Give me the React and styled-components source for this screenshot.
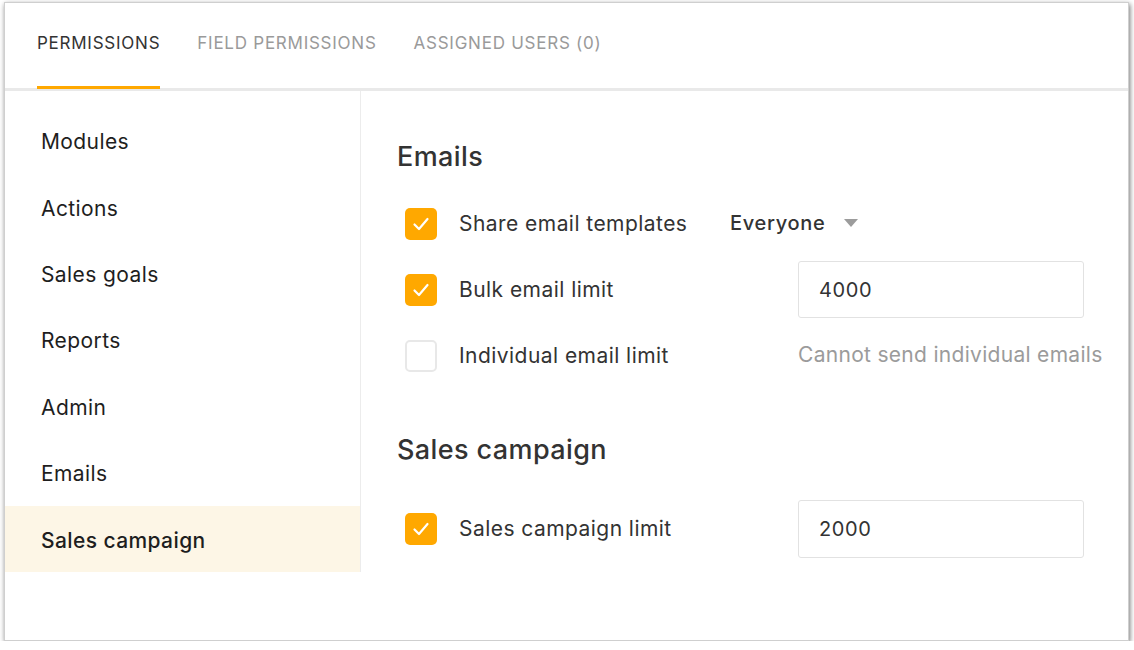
import React from "react";
import styled, { createGlobalStyle } from "styled-components";

const Global = createGlobalStyle`
  html, body { margin: 0; padding: 0; background: #ffffff; }
  body { font-family: Inter, "Noto Sans", "Liberation Sans", sans-serif; -webkit-font-smoothing: antialiased; }
  * { box-sizing: border-box; }
`;

const ORANGE = "#ffa800";

const Card = styled.div`
  margin: 2px 0 0 4px;
  width: 1125px;
  height: 639px;
  background: #fff;
  border: 1px solid #cfcfcf;
  box-shadow: 1px 2px 5px rgba(0, 0, 0, 0.55);
  display: flex;
  flex-direction: column;
`;

const TabBar = styled.div`
  height: 88px;
  flex: none;
  display: flex;
  align-items: stretch;
  gap: 37px;
  padding-left: 32px;
  border-bottom: 3px solid #e9e9e9;
`;

const Tab = styled.div`
  position: relative;
  display: flex;
  align-items: center;
  padding-bottom: 6px;
  font-size: 17px;
  letter-spacing: 0.75px;
  text-transform: uppercase;
  color: ${(p) => (p.$active ? "#333" : "#9a9a9a")};
  &::after {
    content: "";
    position: absolute;
    left: 0;
    right: 0;
    bottom: -1px;
    height: 3px;
    background: ${(p) => (p.$active ? ORANGE : "transparent")};
  }
`;

const Body = styled.div`
  flex: 1;
  display: flex;
  align-items: flex-start;
`;

const Sidebar = styled.nav`
  width: 356px;
  flex: none;
  padding-top: 16.5px;
  border-right: 1px solid #ececec;
  display: flex;
  flex-direction: column;
`;

const SideItem = styled.div`
  height: 66.4px;
  display: flex;
  align-items: center;
  padding-left: 36px;
  padding-top: 2px;
  font-size: 21px;
  letter-spacing: 0.4px;
  color: #1e1e1e;
  font-weight: ${(p) => (p.$active ? 500 : 400)};
  background: ${(p) => (p.$active ? "#fdf6e6" : "transparent")};
`;

const Content = styled.main`
  flex: 1;
  padding: 50px 0 0 36px;
`;

const Section = styled.section`
  margin-bottom: ${(p) => p.$after || 0}px;
`;

const Heading = styled.h2`
  margin: 0 0 ${(p) => p.$gap}px 0;
  font-size: 27px;
  line-height: 32px;
  font-weight: 500;
  letter-spacing: 0.4px;
  color: #333;
`;

const Row = styled.div`
  height: 66px;
  display: flex;
  align-items: center;
  padding-left: 8px;
`;

const Box = styled.span`
  width: 32px;
  height: 32px;
  flex: none;
  border-radius: 5px;
  display: flex;
  align-items: center;
  justify-content: center;
  background: ${(p) => (p.$checked ? ORANGE : "#fff")};
  border: ${(p) => (p.$checked ? "none" : "2px solid #e8e8e8")};
  margin-right: 22px;
`;

const Label = styled.span`
  width: ${(p) => p.$w}px;
  flex: none;
  font-size: 21px;
  letter-spacing: 0.45px;
  color: #333;
  margin-top: -1px;
`;

const Dropdown = styled.div`
  display: flex;
  align-items: center;
  gap: 18px;
  font-size: 20px;
  font-weight: 500;
  letter-spacing: 0.7px;
  color: #333;
  margin-top: -2px;
`;

const Caret = styled.span`
  width: 0;
  height: 0;
  border-left: 7px solid transparent;
  border-right: 7px solid transparent;
  border-top: 8px solid #9c9c9c;
`;

const Input = styled.div`
  width: 286px;
  height: ${(p) => p.$h || 57}px;
  border: 1px solid #e2e2e2;
  border-radius: 3px;
  display: flex;
  align-items: center;
  padding-left: 20px;
  font-size: 20px;
  letter-spacing: 0.6px;
  color: #333;
  margin-top: -1px;
`;

const Note = styled.span`
  font-size: 21px;
  letter-spacing: 0.3px;
  color: #9b9b9b;
  margin-top: -3px;
`;

const Check = ({ checked }) => (
  <Box $checked={checked}>
    {checked && (
      <svg width="32" height="32" viewBox="0 0 32 32">
        <polyline points="9.5,16.5 14,21 22.5,11" fill="none" stroke="#fff" strokeWidth="2.2" strokeLinecap="round" strokeLinejoin="round" />
      </svg>
    )}
  </Box>
);

const sideItems = ["Modules", "Actions", "Sales goals", "Reports", "Admin", "Emails", "Sales campaign"];

export default function App() {
  return (
    <>
      <Global />
      <Card>
        <TabBar>
          <Tab $active>Permissions</Tab>
          <Tab>Field permissions</Tab>
          <Tab>Assigned users (0)</Tab>
        </TabBar>
        <Body>
          <Sidebar>
            {sideItems.map((s) => (
              <SideItem key={s} $active={s === "Sales campaign"}>{s}</SideItem>
            ))}
          </Sidebar>
          <Content>
            <Section $after={45}>
              <Heading $gap={18}>Emails</Heading>
              <Row>
                <Check checked />
                <Label $w={271}>Share email templates</Label>
                <Dropdown>
                  Everyone
                  <Caret />
                </Dropdown>
              </Row>
              <Row>
                <Check checked />
                <Label $w={339}>Bulk email limit</Label>
                <Input>4000</Input>
              </Row>
              <Row>
                <Check />
                <Label $w={339}>Individual email limit</Label>
                <Note>Cannot send individual emails</Note>
              </Row>
            </Section>
            <Section>
              <Heading $gap={30}>Sales campaign</Heading>
              <Row>
                <Check checked />
                <Label $w={339}>Sales campaign limit</Label>
                <Input $h={58}>2000</Input>
              </Row>
            </Section>
          </Content>
        </Body>
      </Card>
    </>
  );
}
